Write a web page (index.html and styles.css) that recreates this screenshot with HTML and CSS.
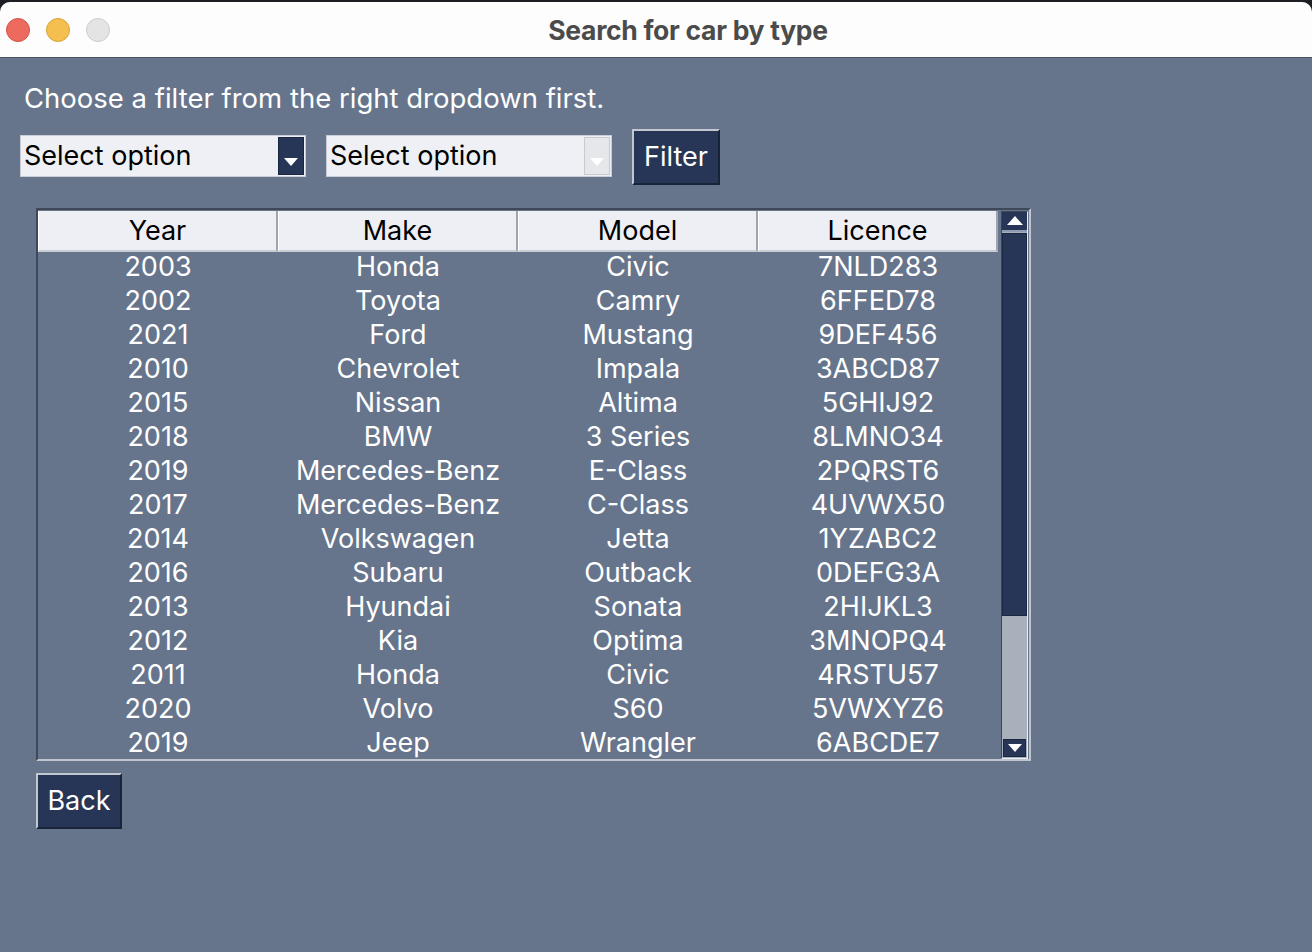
FILE: index.html
```html
<!DOCTYPE html>
<html>
<head>
<meta charset="utf-8">
<link rel="stylesheet" href="styles.css">
</head>
<body>
<div class="window">
  <div class="titlebar">
    <div class="lights">
      <span class="light red"></span>
      <span class="light yellow"></span>
      <span class="light grey"></span>
    </div>
    <div class="title">Search for car by type</div>
  </div>
  <div class="content">
    <div class="label">Choose a filter from the right dropdown first.</div>
    <div class="controls">
      <div class="select">
        <span class="select-text">Select option</span>
        <span class="select-btn active"><span class="tri-down"></span></span>
      </div>
      <div class="select">
        <span class="select-text">Select option</span>
        <span class="select-btn disabled"><span class="tri-down"></span></span>
      </div>
      <div class="btn filter">Filter</div>
    </div>
    <div class="table-frame">
      <div class="table">
        <div class="thead">
          <div class="th">Year</div>
          <div class="th">Make</div>
          <div class="th">Model</div>
          <div class="th">Licence</div>
        </div>
        <div class="tbody">
          <div class="tr"><div>2003</div><div>Honda</div><div>Civic</div><div>7NLD283</div></div>
          <div class="tr"><div>2002</div><div>Toyota</div><div>Camry</div><div>6FFED78</div></div>
          <div class="tr"><div>2021</div><div>Ford</div><div>Mustang</div><div>9DEF456</div></div>
          <div class="tr"><div>2010</div><div>Chevrolet</div><div>Impala</div><div>3ABCD87</div></div>
          <div class="tr"><div>2015</div><div>Nissan</div><div>Altima</div><div>5GHIJ92</div></div>
          <div class="tr"><div>2018</div><div>BMW</div><div>3 Series</div><div>8LMNO34</div></div>
          <div class="tr"><div>2019</div><div>Mercedes-Benz</div><div>E-Class</div><div>2PQRST6</div></div>
          <div class="tr"><div>2017</div><div>Mercedes-Benz</div><div>C-Class</div><div>4UVWX50</div></div>
          <div class="tr"><div>2014</div><div>Volkswagen</div><div>Jetta</div><div>1YZABC2</div></div>
          <div class="tr"><div>2016</div><div>Subaru</div><div>Outback</div><div>0DEFG3A</div></div>
          <div class="tr"><div>2013</div><div>Hyundai</div><div>Sonata</div><div>2HIJKL3</div></div>
          <div class="tr"><div>2012</div><div>Kia</div><div>Optima</div><div>3MNOPQ4</div></div>
          <div class="tr"><div>2011</div><div>Honda</div><div>Civic</div><div>4RSTU57</div></div>
          <div class="tr"><div>2020</div><div>Volvo</div><div>S60</div><div>5VWXYZ6</div></div>
          <div class="tr"><div>2019</div><div>Jeep</div><div>Wrangler</div><div>6ABCDE7</div></div>
        </div>
      </div>
      <div class="scrollbar">
        <div class="sb-btn up"><span class="tri-up"></span></div>
        <div class="sb-thumb"></div>
        <div class="sb-track"></div>
        <div class="sb-btn down"><span class="tri-down"></span></div>
      </div>
    </div>
    <div class="btn back">Back</div>
  </div>
</div>
</body>
</html>
```
FILE: styles.css
```css
* { box-sizing: border-box; }
html, body {
  margin: 0;
  padding: 0;
  width: 1312px;
  height: 952px;
  overflow: hidden;
  background: #1d1f23;
  font-family: Inter, "Noto Sans", sans-serif;
}
.window {
  margin-top: 2px;
  height: 950px;
  background: #66758c;
  border-radius: 10px 10px 0 0;
  overflow: hidden;
}
.titlebar {
  height: 56px;
  background: #fdfdfd;
  border-bottom: 1px solid #4a5566;
  position: relative;
  display: flex;
  align-items: center;
  justify-content: center;
}
.lights {
  position: absolute;
  left: 6px;
  top: 16px;
  display: flex;
  gap: 16px;
}
.light {
  width: 24px;
  height: 24px;
  border-radius: 50%;
  display: block;
}
.red { background: #ec6a5e; border: 1px solid #d25548; }
.yellow { background: #f4bf4f; border: 1px solid #d9a43a; }
.grey { background: #e4e4e4; border: 1px solid #cdcdcd; }
.title {
  font-weight: 700;
  font-size: 26.5px;
  color: #4b4b4b;
  letter-spacing: -0.3px;
  margin-left: 64px;
}
.content {
  padding: 25px 0 0 20px;
  color: #fff;
  font-size: 27px;
}
.label {
  line-height: 30px;
  padding-left: 4px;
  font-size: 27.5px;
  color: #fff;
}
.controls {
  display: flex;
  align-items: center;
  gap: 20px;
  margin-top: 16px;
  height: 56px;
}
.select {
  width: 286px;
  height: 42px;
  margin-top: -2px;
  background: #eef0f5;
  border: 1px solid #c8ccd4;
  display: flex;
  align-items: stretch;
}
.select-text {
  flex: 1;
  color: #000;
  line-height: 40px;
  padding-left: 3px;
}
.select-btn {
  width: 26px;
  margin: 1px 1px 1px 0;
  display: flex;
  align-items: flex-end;
  justify-content: center;
  padding-bottom: 8px;
}
.select-btn.active { background: #273656; border: 1px solid #1b2640; }
.select-btn.disabled { background: #e6e7ea; border: 1px solid #c8cacf; }
.tri-down {
  width: 0;
  height: 0;
  border-left: 7px solid transparent;
  border-right: 7px solid transparent;
  border-top: 8px solid #fff;
}
.tri-up {
  width: 0;
  height: 0;
  border-left: 8px solid transparent;
  border-right: 8px solid transparent;
  border-bottom: 9px solid #fff;
}
.btn {
  background: #273656;
  color: #fff;
  border: 2px solid #1a2438;
  border-top-color: #c3c8d0;
  border-left-color: #c3c8d0;
  display: flex;
  align-items: center;
  justify-content: center;
  padding-bottom: 2px;
}
.filter {
  width: 88px;
  height: 56px;
}
.table-frame {
  margin: 23px 0 0 16px;
  width: 995px;
  height: 553px;
  border: 2px solid #c0c5cd;
  border-top-color: #3e4859;
  border-left-color: #3e4859;
  display: flex;
  gap: 3px;
  padding: 1px 1px 0 0;
}
.table {
  width: 960px;
  display: flex;
  flex-direction: column;
}
.thead {
  display: grid;
  grid-template-columns: repeat(4, 240px);
  height: 38px;
}
.th {
  background: #eeeff4;
  color: #000;
  text-align: center;
  line-height: 38px;
  padding-top: 1px;
  border-right: 2px solid #9fa4ad;
  border-left: 1px solid #fff;
  border-bottom: 2px solid #c9ccd3;
}
.tbody {
  flex: 1;
  padding-top: 1px;
}
.tr {
  display: grid;
  grid-template-columns: repeat(4, 240px);
  height: 34px;
  line-height: 34px;
  text-align: center;
  color: #fff;
}
.scrollbar {
  width: 28px;
  display: flex;
  flex-direction: column;
  border: 1px solid #e9eef5;
  border-top-color: #3c4657;
  border-left-color: #3c4657;
  background: #a7b0bb;
}
.sb-btn {
  background: #273656;
  display: flex;
  align-items: center;
  justify-content: center;
}
.sb-btn.up {
  height: 20px;
  border-bottom: 2px solid #8f9bb0;
  align-items: flex-start;
  padding-top: 4px;
}
.sb-btn.down {
  height: 18px;
  margin: 0 1px 1px 1px;
  border: 1px solid #1b2640;
}
.sb-thumb {
  height: 383px;
  background: #273656;
  border: 1px solid #1b2640;
  margin: 1px 0 0 0;
}
.sb-track {
  flex: 1;
}
.back {
  width: 86px;
  height: 56px;
  margin: 12px 0 0 16px;
}
```
